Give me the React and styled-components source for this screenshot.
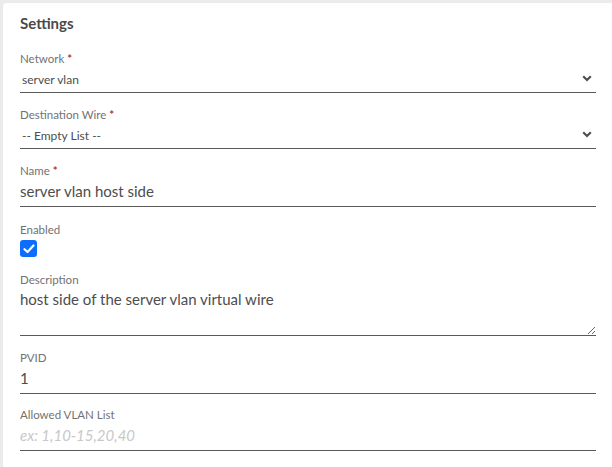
import React from 'react';
import styled, { createGlobalStyle } from 'styled-components';

const GlobalStyle = createGlobalStyle`
    html, body {
        margin: 0;
        padding: 0;
        background: #ebebeb;
        font-family: Lato, "Open Sans", sans-serif;
    }
    * { box-sizing: border-box; }
`;

const Page = styled.div`
    padding: 3px 0 0 3px;
    min-height: 467px;
`;

const Card = styled.section`
    background: #fff;
    border-radius: 4px 0 0 0;
    padding: 11px 16px 20px 17px;
    min-height: 464px;
`;

const Heading = styled.h2`
    margin: 0 0 19px;
    font-size: 15px;
    line-height: 18px;
    font-weight: 700;
    color: #4a4a4a;
`;

const Field = styled.div`
    margin-bottom: ${p => p.$gap ?? 14}px;
`;

const Label = styled.label`
    display: block;
    font-size: 11.5px;
    line-height: 16px;
    color: #727272;
`;

const Required = styled.span`
    color: #b23a3a;
    font-weight: 700;
    margin-left: 3px;
`;

const SelectWrap = styled.div`
    position: relative;
    border-bottom: 1.5px solid #5a5a5a;
`;

const Select = styled.select`
    appearance: none;
    width: 100%;
    height: 25px;
    border: none;
    background: transparent;
    padding: 0 0 0 2px;
    font-family: inherit;
    font-size: 12px;
    color: #4d4d4d;
    outline: none;
`;

const Chevron = styled.svg`
    position: absolute;
    right: 4px;
    top: 8px;
    pointer-events: none;
`;

const Input = styled.input`
    display: block;
    width: 100%;
    height: 28px;
    border: none;
    border-bottom: 1.5px solid #5a5a5a;
    padding: 0 0 4px;
    font-family: inherit;
    font-size: 15px;
    color: #4d4d4d;
    outline: none;
    background: transparent;

    &::placeholder {
        color: #c8c8c8;
        font-style: italic;
    }
`;

const TextArea = styled.textarea`
    display: block;
    width: 100%;
    height: 48px;
    border: none;
    border-bottom: 1.5px solid #5a5a5a;
    padding: 1px 0 0;
    font-family: inherit;
    font-size: 15px;
    line-height: 20px;
    color: #4d4d4d;
    outline: none;
    resize: vertical;
    background: transparent;
`;

const CheckBox = styled.span`
    display: flex;
    align-items: center;
    justify-content: center;
    width: 17px;
    height: 17px;
    margin-top: 2px;
    border-radius: 3px;
    background: ${p => (p.$checked ? '#0d6efd' : '#fff')};
`;

const Dropdown = ({ value }) => (
    <SelectWrap>
        <Select defaultValue={value}>
            <option>{value}</option>
        </Select>
        <Chevron width="10" height="7" viewBox="0 0 10 7">
            <polyline points="1.2,1.2 5,5 8.8,1.2" fill="none" stroke="#4f4f4f" strokeWidth="2.2" />
        </Chevron>
    </SelectWrap>
);

const App = () => (
    <>
        <GlobalStyle />
        <Page>
            <Card>
                <Heading>Settings</Heading>

                <Field>
                    <Label>Network<Required>*</Required></Label>
                    <Dropdown value="server vlan" />
                </Field>

                <Field>
                    <Label>Destination Wire<Required>*</Required></Label>
                    <Dropdown value="-- Empty List --" />
                </Field>

                <Field $gap={15}>
                    <Label>Name<Required>*</Required></Label>
                    <Input defaultValue="server vlan host side" />
                </Field>

                <Field $gap={15}>
                    <Label>Enabled</Label>
                    <CheckBox $checked>
                        <svg width="12" height="10" viewBox="0 0 12 10">
                            <polyline points="1.5,5.2 4.5,8 10.5,1.5" fill="none" stroke="#fff" strokeWidth="2.2" strokeLinecap="round" strokeLinejoin="round" />
                        </svg>
                    </CheckBox>
                </Field>

                <Field>
                    <Label>Description</Label>
                    <TextArea defaultValue="host side of the server vlan virtual wire" />
                </Field>

                <Field $gap={13}>
                    <Label>PVID</Label>
                    <Input defaultValue="1" />
                </Field>

                <Field>
                    <Label>Allowed VLAN List</Label>
                    <Input placeholder="ex: 1,10-15,20,40" />
                </Field>
            </Card>
        </Page>
    </>
);

export default App;
